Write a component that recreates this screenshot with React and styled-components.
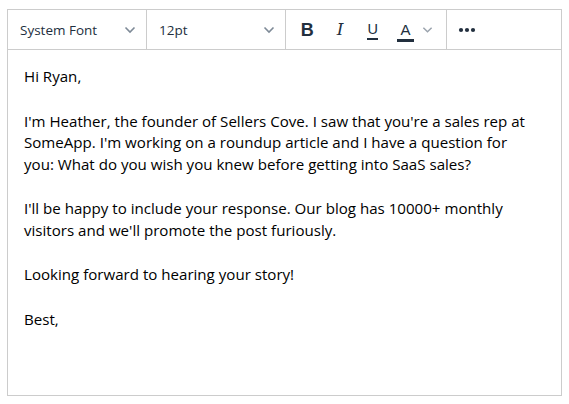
import { createGlobalStyle, styled } from "styled-components"

const GlobalStyle = createGlobalStyle`
    html, body {
        margin: 0;
        padding: 0;
        background: #fff;
    }
    body {
        font-family: "Open Sans", "Noto Sans", sans-serif;
    }
`

const Page = styled.div`
    padding: 9px 7px;
`

const Editor = styled.div`
    box-sizing: border-box;
    width: 555px;
    height: 387px;
    border: 1px solid #cccccc;
    display: flex;
    flex-direction: column;
`

const Toolbar = styled.div`
    display: flex;
    height: 39px;
    border-bottom: 1px solid #cccccc;
`

const Group = styled.div`
    display: flex;
    align-items: center;
    width: ${p => p.width}px;
    padding: 0 ${p => p.pad || 0}px;
    box-sizing: border-box;
    border-right: ${p => (p.last ? "none" : "1px solid #cccccc")};
`

const Select = styled.div`
    flex: 1;
    display: flex;
    align-items: center;
    justify-content: space-between;
    padding: 0 10px 0 12px;
    font-size: 13.5px;
    color: #222f3e;
`

const ToolButton = styled.div`
    width: ${p => p.w || 34}px;
    height: 34px;
    display: flex;
    align-items: center;
    justify-content: ${p => p.align || "center"};
    color: #222f3e;
`

const Letter = styled.span`
    font-family: ${p => (p.serif ? '"DejaVu Serif", serif' : '"Liberation Sans", sans-serif')};
    font-size: ${p => p.size || 18}px;
    font-weight: ${p => (p.bold ? 700 : 400)};
    font-style: ${p => (p.italic ? "italic" : "normal")};
    line-height: 1;
`

const Underlined = styled.span`
    display: inline-flex;
    flex-direction: column;
    align-items: center;
    margin-top: ${p => p.shift || 0}px;
`

const Bar = styled.span`
    display: block;
    width: ${p => p.w}px;
    height: ${p => p.h}px;
    margin-top: ${p => p.gap}px;
    background: #222f3e;
`

const Content = styled.div`
    flex: 1;
    padding: 16px 16px;
    font-family: "Open Sans", "Noto Sans", sans-serif;
    font-size: 15.1px;
    line-height: 21.5px;
    color: #000;
    white-space: nowrap;
`

const Para = styled.p`
    margin: 0 0 23px;
`

const Chevron = ({ color = "#7e8a97", w = 12 }) => (
    <svg width={w} height="8" viewBox="0 0 12 8">
        <path d="M1.5 1.5 L6 6 L10.5 1.5" fill="none" stroke={color} strokeWidth="1.6" />
    </svg>
)

const Dots = () => (
    <svg width="18" height="6" viewBox="0 0 18 6">
        <circle cx="3" cy="3" r="2.1" fill="#222f3e" />
        <circle cx="9" cy="3" r="2.1" fill="#222f3e" />
        <circle cx="15" cy="3" r="2.1" fill="#222f3e" />
    </svg>
)

const App = () => {
    return (
        <Page>
            <GlobalStyle />
            <Editor>
                <Toolbar>
                    <Group width={139}>
                        <Select>
                            <span>System Font</span>
                            <Chevron />
                        </Select>
                    </Group>
                    <Group width={139}>
                        <Select>
                            <span>12pt</span>
                            <Chevron />
                        </Select>
                    </Group>
                    <Group width={161} pad={5}>
                        <ToolButton>
                            <Letter bold size={18}>B</Letter>
                        </ToolButton>
                        <ToolButton>
                            <Letter serif italic size={17}>I</Letter>
                        </ToolButton>
                        <ToolButton>
                            <Underlined shift={3}>
                                <Letter size={14.5}>U</Letter>
                                <Bar w={11} h={1.8} gap={2} />
                            </Underlined>
                        </ToolButton>
                        <ToolButton>
                            <Underlined shift={4}>
                                <Letter size={15}>A</Letter>
                                <Bar w={17} h={3} gap={2} />
                            </Underlined>
                        </ToolButton>
                        <ToolButton w={20} align="flex-start">
                            <Chevron color="#9aa3ad" w={11} />
                        </ToolButton>
                    </Group>
                    <Group last pad={3}>
                        <ToolButton>
                            <Dots />
                        </ToolButton>
                    </Group>
                </Toolbar>
                <Content>
                    <Para>Hi Ryan,</Para>
                    <Para>
                        I'm Heather, the founder of Sellers Cove. I saw that you're a sales rep at
                        <br />
                        SomeApp. I'm working on a roundup article and I have a question for
                        <br />
                        you: What do you wish you knew before getting into SaaS sales?
                    </Para>
                    <Para>
                        I'll be happy to include your response. Our blog has 10000+ monthly
                        <br />
                        visitors and we'll promote the post furiously.
                    </Para>
                    <Para>Looking forward to hearing your story!</Para>
                    <Para>Best,</Para>
                </Content>
            </Editor>
        </Page>
    )
}

export default App
